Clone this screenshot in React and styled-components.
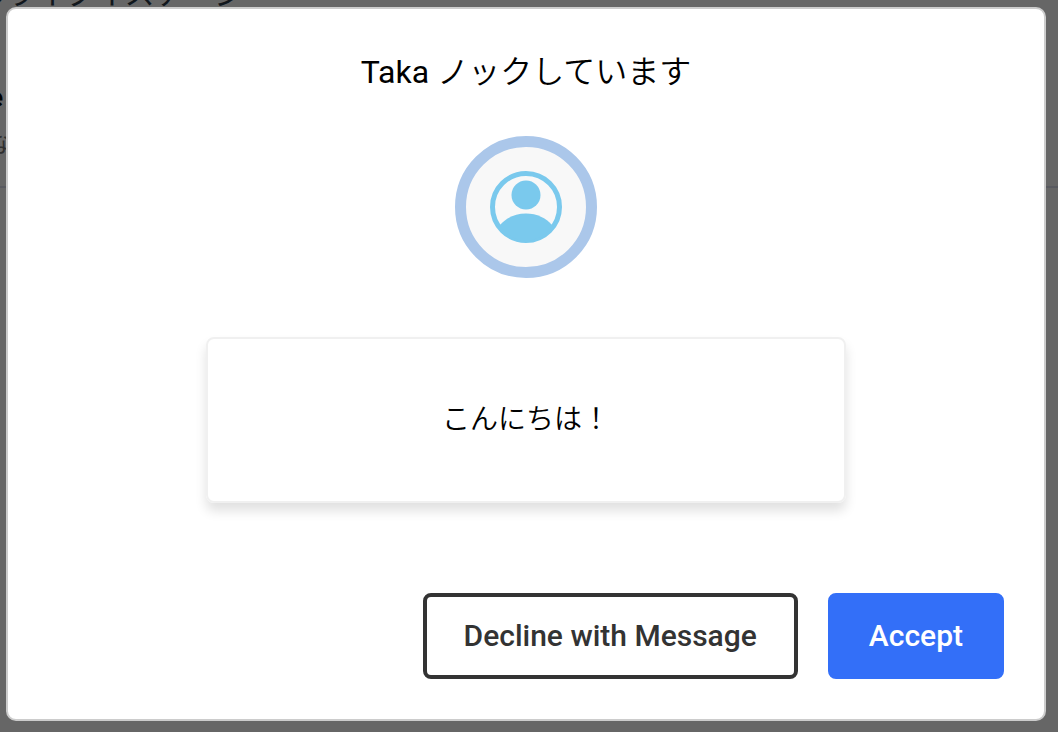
import styled, { createGlobalStyle } from "styled-components";

const GlobalStyle = createGlobalStyle`
  * {
    box-sizing: border-box;
  }

  body {
    margin: 0;
    background-color: white;
    font-family: Roboto, "Noto Sans CJK JP", sans-serif;
    color: black;
  }
`;

const Page = styled.div`
  min-height: 100vh;
  overflow: hidden;
`;

/* the stage page that stays dimmed behind the dialog */
const Stage = styled.main`
  position: absolute;
  inset: 0;
  overflow: hidden;
`;

const StageTitle = styled.h1`
  margin: -28px 0 0 -24px;
  font-size: 30px;
  line-height: 44px;
  font-weight: 400;
  color: #2b3a4a;
`;

const Member = styled.section`
  margin-top: 66px;
  padding-bottom: 26px;
  border-bottom: 2px solid #dfe1ef;
`;

const MemberName = styled.p`
  margin: 0 0 0 -12px;
  font-size: 28px;
  line-height: 32px;
  font-weight: 700;
`;

const MemberNote = styled.p`
  margin: 14px 0 0 -12px;
  font-size: 24px;
  line-height: 32px;
  color: #777777;
`;

const Overlay = styled.div`
  position: relative;
  display: flex;
  min-height: 100vh;
  padding: 7px 12px 11px 6px;
  background-color: rgba(0, 0, 0, 0.6);
`;

const Dialog = styled.div`
  display: flex;
  flex-direction: column;
  align-items: center;
  flex: 1;
  padding: 40px;
  background-color: white;
  border: 2px solid #cccccc;
  border-radius: 10px;
`;

const Title = styled.h2`
  margin: 0;
  font-size: 32px;
  line-height: 46px;
  font-weight: 350;
`;

const Name = styled.span`
  font-weight: 450;
`;

const Avatar = styled.div`
  display: flex;
  align-items: center;
  justify-content: center;
  width: 142px;
  height: 142px;
  margin-top: 41px;
  background-color: #f8f8f8;
  border: 11px solid #abc7ea;
  border-radius: 50%;
`;

const Message = styled.div`
  display: flex;
  align-items: center;
  justify-content: center;
  width: 100%;
  max-width: 640px;
  min-height: 166px;
  margin-top: 59px;
  border: 2px solid #f0f0f0;
  border-radius: 8px;
  box-shadow: 0 8px 12px rgba(0, 0, 0, 0.12);
  font-size: 28px;
  line-height: 40px;
  font-weight: 350;
`;

const Actions = styled.div`
  display: flex;
  align-self: stretch;
  justify-content: flex-end;
  gap: 30px;
  margin-top: auto;
`;

const Button = styled.button`
  height: 86px;
  padding: 0 37px 2px;
  font-family: inherit;
  font-size: 30px;
  font-weight: 500;
  color: ${(props) => (props.$primary ? "white" : "#333333")};
  background-color: ${(props) => (props.$primary ? "#336ff8" : "white")};
  border: 4px solid ${(props) => (props.$primary ? "#336ff8" : "#333333")};
  border-radius: 8px;
  cursor: pointer;
`;

const PersonIcon = () => (
  <svg width="72" height="72" viewBox="0 0 72 72" aria-hidden="true">
    <circle cx="36" cy="36" r="33.5" fill="none" stroke="#7ac9ed" strokeWidth="5" />
    <circle cx="36" cy="24" r="14.5" fill="#7ac9ed" />
    <path d="M10 54C16 47 25 42.5 36 42.5S56 47 62 54A33 33 0 0 1 36 70A33 33 0 0 1 10 54Z" fill="#7ac9ed" />
  </svg>
);

const App = () => {
  return (
    <Page>
      <GlobalStyle />
      <Stage>
        <StageTitle>のライクイステージ</StageTitle>
        <Member>
          <MemberName>e</MemberName>
          <MemberNote>な</MemberNote>
        </Member>
      </Stage>
      <Overlay>
        <Dialog role="dialog" aria-modal="true" aria-labelledby="knock-title">
          <Title id="knock-title">
            <Name>Taka</Name> ノックしています
          </Title>
          <Avatar>
            <PersonIcon />
          </Avatar>
          <Message>こんにちは！</Message>
          <Actions>
            <Button type="button">Decline with Message</Button>
            <Button type="button" $primary>
              Accept
            </Button>
          </Actions>
        </Dialog>
      </Overlay>
    </Page>
  );
};

export default App;
